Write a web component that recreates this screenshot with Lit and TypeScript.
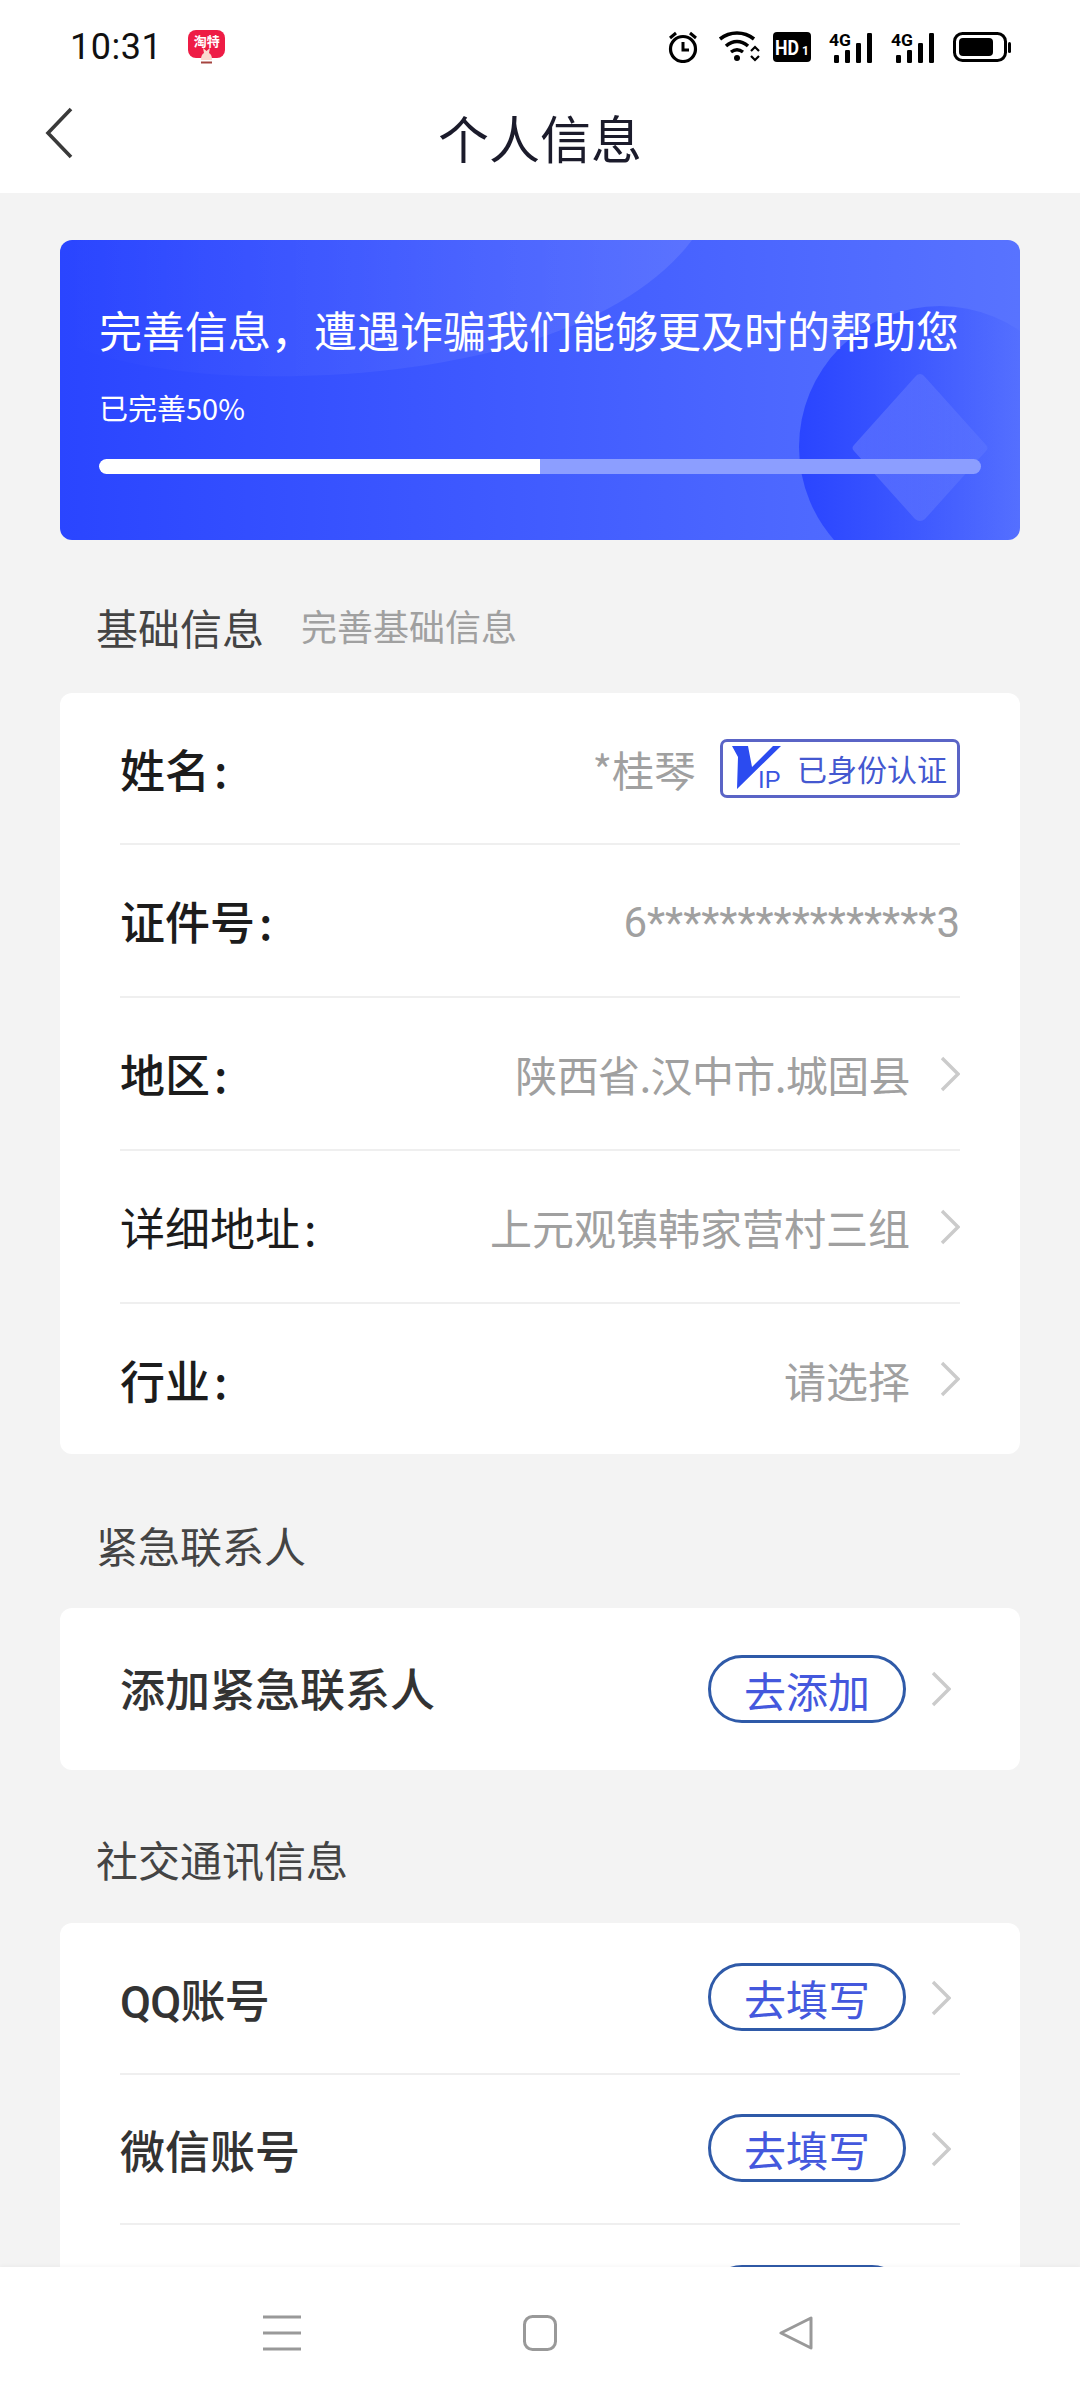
import { LitElement, html, css, svg } from "lit";
import { customElement } from "lit/decorators.js";

const chevron = html`<svg class="chev" viewBox="0 0 20 36" fill="none"><path d="M2 2l16 16L2 34" stroke="#cbcbcb" stroke-width="3.4"/></svg>`;

const bars = svg`
  <rect x="5" y="22" width="5" height="8" rx="1.2" fill="#000"/>
  <rect x="16" y="17" width="5" height="13" rx="1.2" fill="#000"/>
  <rect x="27" y="10" width="5" height="20" rx="1.2" fill="#000"/>
  <rect x="38" y="0" width="5" height="30" rx="1.2" fill="#000"/>`;

const label = (t: string, cls = "") => html`<div class="lab ${cls}">${t}<span class="colon">:</span></div>`;

@customElement("app-root")
export class AppRoot extends LitElement {
  static styles = css`
    :host { display: flex; flex-direction: column; width: 1080px; height: 2400px; overflow: hidden; background: #f3f3f3;
      font-family: "Noto Sans CJK SC", "Noto Sans", sans-serif; }
    svg { display: block; flex: none; }
    .top { background: #fff; height: 193px; flex: none; display: flex; flex-direction: column; }
    .status { height: 94px; display: flex; align-items: center; padding: 0 69px 0 70px; }
    .time { font: 400 36px/1 Roboto, sans-serif; color: #111; letter-spacing: .5px; }
    .appicon { margin-left: 26px; width: 37px; height: 34px; position: relative; }
    .red { height: 28px; border-radius: 8px; background: #ee1c45; color: #fff; font-size: 13px; line-height: 14px; font-weight: 700; text-align: center; padding-top: 4px; box-sizing: border-box; white-space: nowrap; overflow: hidden; }
    .rabbit { position: absolute; left: 10px; bottom: 0; }
    .sicons { margin-left: auto; display: flex; align-items: center; }
    .sicons text { font-family: Roboto, sans-serif; font-weight: 700; }
    .nav { flex: 1; display: flex; align-items: center; justify-content: center; position: relative; padding-bottom: 13px; }
    .back { position: absolute; left: 44px; top: 12px; }
    .title { font-size: 51px; line-height: 60px; color: #1b1b2b; font-weight: 400; }
    .body { flex: 1; min-height: 0; overflow: hidden; padding: 47px 60px 0; }
    .banner { height: 300px; box-sizing: border-box; border-radius: 12px; padding: 59px 39px 0 40px; position: relative; overflow: hidden;
      background: linear-gradient(90deg, #2a45ff 0%, #5873ff 100%); color: #fff; }
    .deco { position: absolute; left: 0; top: 0; }
    .b1, .b2, .track { position: relative; }
    .b1 { font-size: 43px; line-height: 60px; height: 60px; white-space: nowrap; font-weight: 400; margin-left: -1px; }
    .b2 { font-size: 29px; line-height: 36px; height: 36px; margin-top: 30px; margin-left: -1px; }
    .track { height: 15px; margin-top: 34px; margin-left: -1px; border-radius: 8px; background: #8c9eff; overflow: hidden; }
    .fill { height: 100%; background: #fff; border-radius: 8px 0 0 8px; }
    .head { height: 45px; padding-left: 36px; display: flex; align-items: center; gap: 37px; white-space: nowrap; }
    .h1 { margin: 64px 0 44px; }
    .h2 { margin: 68px 0 41px; }
    .h3 { margin: 66px 0 42px; }
    .head b { font-size: 42px; font-weight: 400; color: #444; }
    .head span { font-size: 36px; color: #a0a0a0; margin-top: -3px; }
    .card { background: #fff; border-radius: 12px; padding: 0 60px; }
    .row { height: 153px; box-sizing: border-box; display: flex; align-items: center; border-bottom: 2px solid #efefef; }
    .row:first-child { height: 152px; }
    .row:last-child { border-bottom: none; height: 150px; }
    .soc .row { height: 150px; }
    .soc .row:first-child { height: 152px; }
    .solo .row:first-child { height: 162px; border: none; }
    .solo .lab { margin-top: -4px; }
    .lab { font-size: 45px; font-weight: 500; color: #1c1c1c; white-space: nowrap; }
    .lab.dim { color: #333; }
    .lab.reg { font-weight: 400; }
    .lab.latin { font-family: Roboto, "Noto Sans CJK SC", sans-serif; letter-spacing: -.75px; }
    .colon { margin-left: 4px; }
    .val { margin-left: auto; font-size: 42px; color: #a0a0a0; white-space: nowrap; }
    .val.tight { letter-spacing: -.6px; }
    .val.stars { font-family: Roboto, "Noto Sans CJK SC", sans-serif; margin-top: 4px; }
    .chev { width: 20px; height: 36px; margin-left: 30px; }
    .tag { margin-left: 24px; width: 240px; height: 59px; box-sizing: border-box; border: 3px solid #5a64c6; border-radius: 7px; display: flex; align-items: center; padding-left: 9px; }
    .tag span { font-size: 30px; color: #4458d0; margin-left: 15px; white-space: nowrap; }
    .tag text { font-family: "Liberation Sans", sans-serif; }
    .btn { margin-left: auto; width: 198px; height: 68px; box-sizing: border-box; border: 3px solid #2f5aa8; border-radius: 34px; color: #4458dd; font-size: 42px; line-height: 63px; text-align: center; flex: none; }
    .soc .btn { margin-top: -2px; }
    .btn + .chev { margin-left: 25px; margin-right: 9px; }
    .bottom { height: 133px; flex: none; background: #fff; box-shadow: 0 -1px 4px rgba(0,0,0,.04); position: relative; display: flex; justify-content: center; align-items: flex-start; padding: 48px 4px 0 0; box-sizing: border-box; gap: 222px; }
  `;

  render() {
    return html`
      <div class="top">
        <div class="status">
          <div class="time">10:31</div>
          <div class="appicon">
            <div class="red">淘特</div>
            <svg class="rabbit" width="17" height="18" viewBox="0 0 17 18"><path d="M3 14c0-4 1-6 3-7L5 2l3.500 3L12 2l-1 5c2 1 3 3 3 7z" fill="#fbd9cf"/><path d="M3 16.500h11" stroke="#a5443f" stroke-width="2"/></svg>
          </div>
          <div class="sicons">
            <svg width="343" height="32" viewBox="0 0 343 32" fill="none">
              <circle cx="15" cy="18" r="12.5" stroke="#000" stroke-width="3.2"/>
              <path d="M15 11v8h6" stroke="#000" stroke-width="3"/>
              <path d="M2 7l6-5M28 7l-6-5" stroke="#000" stroke-width="3"/>
              <g transform="translate(50 0)">
                <path d="M2 8c10-8 24-8 34 0" stroke="#000" stroke-width="3.600"/>
                <path d="M8 15c7-6 15-6 22 0" stroke="#000" stroke-width="3.600"/>
                <path d="M13 21c4-3 8-3 12 0" stroke="#000" stroke-width="3.400"/>
                <circle cx="19" cy="27" r="3" fill="#000"/>
                <path d="M33 20l4-4 4 4M33 25l4 4 4-4" stroke="#000" stroke-width="2.200"/>
              </g>
              <rect x="105" y="1" width="38" height="30" rx="4" fill="#000"/>
              <text x="107" y="24" font-size="20" fill="#fff" textLength="24" lengthAdjust="spacingAndGlyphs">HD</text>
              <text x="134" y="24" font-size="12" fill="#fff">1</text>
              <g transform="translate(161 0)">
                <text x="0" y="15" font-size="17" fill="#000" textLength="22" lengthAdjust="spacingAndGlyphs">4G</text>
                <g transform="translate(0 2)">${bars}</g>
              </g>
              <g transform="translate(223 0)">
                <text x="0" y="15" font-size="17" fill="#000" textLength="22" lengthAdjust="spacingAndGlyphs">4G</text>
                <g transform="translate(0 2)">${bars}</g>
              </g>
              <g transform="translate(285 1)">
                <rect x="1.500" y="1.500" width="51" height="27" rx="8" stroke="#000" stroke-width="3"/>
                <rect x="6" y="6" width="34" height="18" rx="4" fill="#000"/>
                <rect x="55" y="10" width="3" height="11" rx="1.500" fill="#000"/>
              </g>
            </svg>
          </div>
        </div>
        <div class="nav">
          <svg class="back" width="30" height="54" viewBox="0 0 30 54" fill="none"><path d="M27 3L4 27l23 24" stroke="#3a3a3a" stroke-width="3.600"/></svg>
          <div class="title">个人信息</div>
        </div>
      </div>
      <div class="body">
        <div class="banner">
          <svg class="deco" width="960" height="300" viewBox="0 0 960 300">
            <defs>
              <linearGradient id="cg" x1="0" x2="1" y1="0" y2="0"><stop offset="0" stop-color="#2a45ff"/><stop offset=".85" stop-color="#2a45ff" stop-opacity="0"/></linearGradient>
              <linearGradient id="lobe" x1="0" x2="1" y1="0" y2="0"><stop offset="0" stop-color="#fff" stop-opacity="0"/><stop offset="1" stop-color="#fff" stop-opacity=".1"/></linearGradient>
              <linearGradient id="dia" x1="0" x2="1" y1="0" y2="0"><stop offset="0" stop-color="#fff" stop-opacity=".15"/><stop offset="1" stop-color="#fff" stop-opacity=".05"/></linearGradient>
            </defs>
            <path d="M0 0H632C560 96 380 140 190 136 110 134 40 120 0 100z" fill="url(#lobe)"/>
            <circle cx="880" cy="207" r="141" fill="url(#cg)"/>
            <path d="M860 134q3 0 5 3l61 68q3 3 0 6l-61 68q-5 4-10 0l-61-68q-3-3 0-6l61-68q2-3 5-3z" fill="url(#dia)"/>
          </svg>
          <div class="b1">完善信息，遭遇诈骗我们能够更及时的帮助您</div>
          <div class="b2">已完善50%</div>
          <div class="track"><div class="fill" style="width:50%"></div></div>
        </div>

        <div class="head h1"><b>基础信息</b><span>完善基础信息</span></div>
        <div class="card">
          <div class="row">
            ${label("姓名")}
            <div class="val">*桂琴</div>
            <div class="tag">
              <svg width="50" height="48" viewBox="0 0 50 48"><path d="M0 0h16l4 21L41 0h8L5 43 6 11z" fill="#2b4bf0" transform="translate(0 2)"/><text x="26" y="44" font-size="24" fill="#3a55e0">IP</text></svg>
              <span>已身份认证</span>
            </div>
          </div>
          <div class="row">${label("证件号")}<div class="val stars">6****************3</div></div>
          <div class="row">${label("地区")}<div class="val tight">陕西省.汉中市.城固县</div>${chevron}</div>
          <div class="row">${label("详细地址", "reg")}<div class="val">上元观镇韩家营村三组</div>${chevron}</div>
          <div class="row">${label("行业")}<div class="val">请选择</div>${chevron}</div>
        </div>

        <div class="head h2"><b>紧急联系人</b></div>
        <div class="card solo">
          <div class="row"><div class="lab dim">添加紧急联系人</div><div class="btn">去添加</div>${chevron}</div>
        </div>

        <div class="head h3"><b>社交通讯信息</b></div>
        <div class="card soc">
          <div class="row"><div class="lab dim latin">QQ账号</div><div class="btn">去填写</div>${chevron}</div>
          <div class="row"><div class="lab dim">微信账号</div><div class="btn">去填写</div>${chevron}</div>
          <div class="row"><div class="btn"></div>${chevron}</div>
        </div>
      </div>
      <div class="bottom">
        <svg width="38" height="36" viewBox="0 0 38 36"><path d="M0 2h38M0 18h38M0 34h38" stroke="#999" stroke-width="3"/></svg>
        <svg width="34" height="36" viewBox="0 0 34 36" fill="none"><rect x="1.500" y="1.500" width="31" height="33" rx="8" stroke="#999" stroke-width="3"/></svg>
        <svg width="34" height="36" viewBox="0 0 34 36" fill="none"><path d="M32 3v30L2 18z" stroke="#999" stroke-width="3" stroke-linejoin="round"/></svg>
      </div>
    `;
  }
}
